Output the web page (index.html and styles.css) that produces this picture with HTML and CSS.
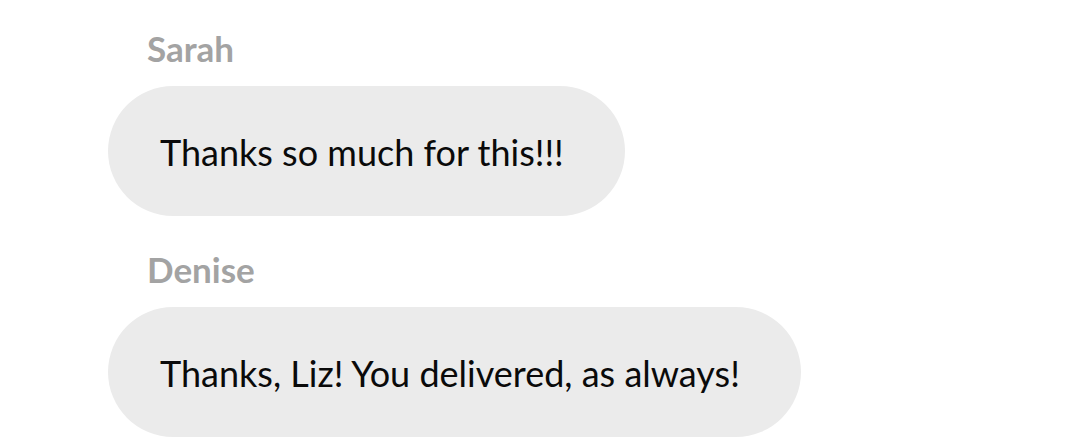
FILE: index.html
```html
<!DOCTYPE html>
<html lang="en">
<head>
<meta charset="utf-8">
<title>Chat</title>
<link rel="stylesheet" href="styles.css">
</head>
<body>
<main class="thread">
  <section class="msg">
    <div class="name">Sarah</div>
    <div class="bubble">Thanks so much for this!!!</div>
  </section>
  <section class="msg">
    <div class="name">Denise</div>
    <div class="bubble">Thanks, Liz! You delivered, as always!</div>
  </section>
</main>
</body>
</html>
```
FILE: styles.css
```css
html, body {
  margin: 0;
  padding: 0;
  background: #ffffff;
}
body {
  font-family: Lato, "Noto Sans", sans-serif;
  width: 1080px;
  height: 445px;
  overflow: hidden;
}
.thread {
  display: flex;
  flex-direction: column;
  align-items: flex-start;
  padding: 28px 0 0 108px;
  gap: 33px;
}
.msg {
  display: flex;
  flex-direction: column;
  align-items: flex-start;
  gap: 18px;
}
.name {
  margin-left: 39px;
  font-weight: 700;
  font-size: 35px;
  line-height: 40px;
  color: #a3a3a3;
}
.bubble {
  display: flex;
  align-items: center;
  height: 130px;
  box-sizing: border-box;
  padding: 2px 61px 0 52px;
  border-radius: 65px;
  background: #ebebeb;
  color: #0a0a0a;
  font-size: 36px;
  line-height: 40px;
}
```
